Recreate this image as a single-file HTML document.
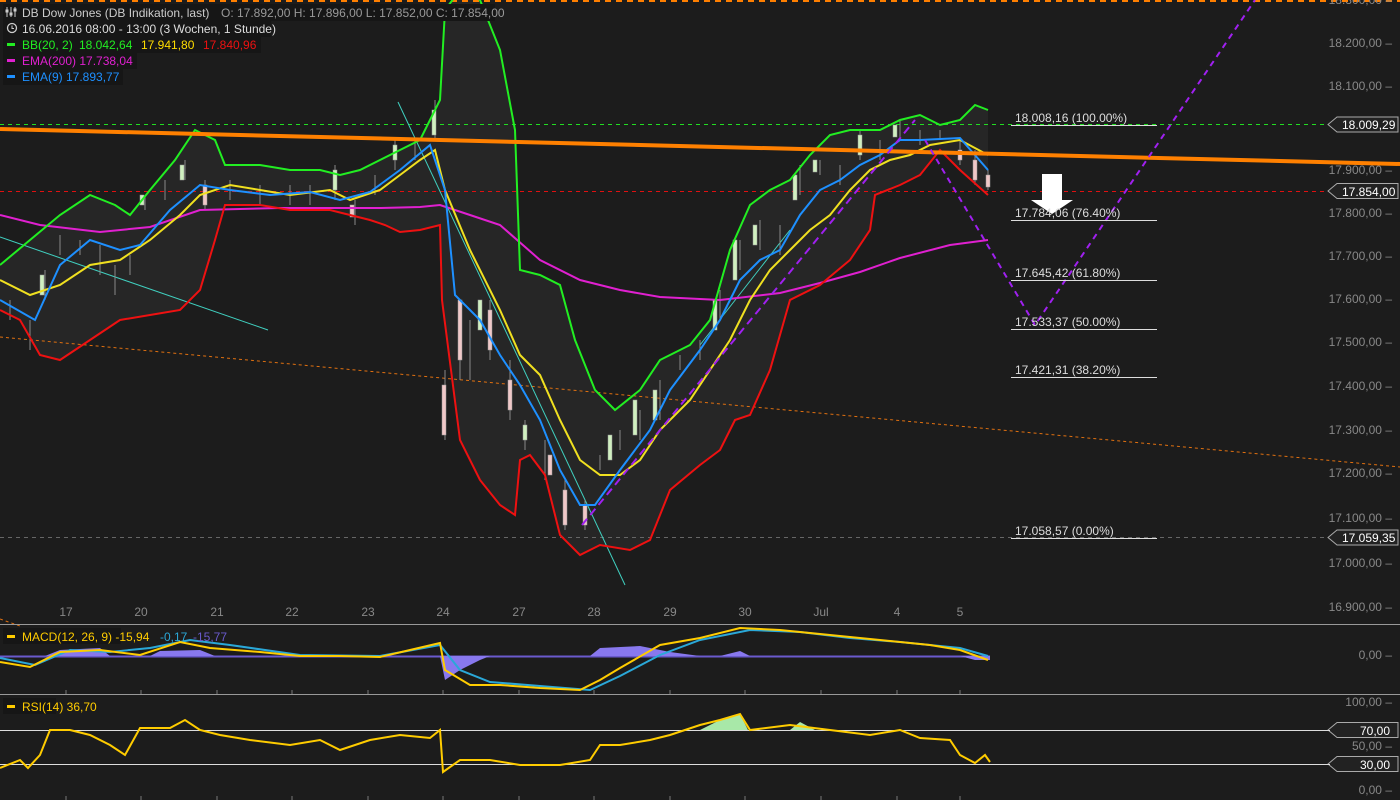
<!DOCTYPE html><html><head><meta charset="utf-8"><style>
html,body{margin:0;padding:0;background:#1c1c1c;width:1400px;height:800px;overflow:hidden;font-family:"Liberation Sans",sans-serif}
svg{display:block}
text{font-family:"Liberation Sans",sans-serif}
</style></head><body>
<svg width="1400" height="800" viewBox="0 0 1400 800">
<rect width="1400" height="800" fill="#1c1c1c"/>
<!-- BB shading -->
<polygon fill="#262626" points="0,265 30,240 60,215 90,195 115,205 130,215 150,190 175,160 195,130 215,140 225,165 260,165 290,170 320,170 340,175 360,170 380,160 400,150 420,140 440,100 445,10 460,-10 480,0 500,50 515,130 520,270 540,275 560,285 575,340 595,390 615,410 640,390 660,360 690,345 710,320 730,250 750,205 770,190 790,180 810,155 830,135 850,130 880,130 900,120 920,115 940,125 960,120 975,105 988,110 988,195 960,170 940,150 920,175 900,185 875,195 870,230 850,260 820,285 790,300 770,370 750,415 735,420 720,450 700,465 670,490 650,540 630,550 600,545 580,555 560,535 545,475 530,455 520,460 515,515 500,505 480,480 460,440 442,300 440,225 420,230 400,232 385,225 370,220 350,215 330,210 290,210 260,205 225,205 215,240 200,290 180,310 150,315 120,320 90,340 60,360 40,355 20,320 0,310"/>
<!-- top orange dashed -->
<line x1="0" y1="1" x2="1400" y2="1" stroke="#ff7f00" stroke-width="2" stroke-dasharray="6,5"/>
<!-- horizontal dashed levels -->
<line x1="0" y1="124.5" x2="1330" y2="124.5" stroke="#22dd22" stroke-dasharray="4,4"/>
<line x1="0" y1="191.5" x2="1330" y2="191.5" stroke="#e01010" stroke-dasharray="4,4"/>
<line x1="0" y1="537.5" x2="1330" y2="537.5" stroke="#666" stroke-dasharray="4,4"/>
<!-- orange dashed trend -->
<line x1="0" y1="337" x2="1400" y2="467" stroke="#e07010" stroke-dasharray="3,3"/>
<!-- cyan thin lines -->
<line x1="0" y1="237" x2="268" y2="330" stroke="#40d0c0" stroke-width="1"/>
<line x1="398" y1="102" x2="625" y2="585" stroke="#40d0c0" stroke-width="1"/>
<line x1="700" y1="345" x2="790" y2="230" stroke="#40d0c0" stroke-width="1"/>
<!-- candles (approx) -->
<g stroke="#888" stroke-width="1">
<path d="M10 300v20M30 320v30M45 270v30M60 235v20M80 240v15M100 245v30M115 265v30M130 255v20M145 195v15M165 180v20M185 160v20M205 180v30M230 180v20M260 185v20M290 185v20M310 185v20M335 165v35M355 200v25M375 175v20M395 140v30M415 140v20M435 100v40M445 370v70M460 300v80M470 320v60M490 300v60M510 360v60M525 420v30M545 440v40M565 480v50M585 500v30M600 455v15M620 430v20M640 410v30M660 380v40M680 355v15M700 340v20M720 290v30M740 240v30M760 220v30M780 225v30M800 165v30M820 160v15M840 165v20M860 130v30M880 140v20M900 120v20M920 130v15M940 130v10M960 140v25M975 150v35M988 170v20"/>
</g>
<g fill="#f0c8c8" stroke="#999" stroke-width="0.5">
<rect x="442" y="385" width="4" height="50"/><rect x="458" y="300" width="4" height="60"/><rect x="488" y="310" width="4" height="40"/><rect x="508" y="380" width="4" height="30"/><rect x="548" y="455" width="4" height="20"/><rect x="563" y="490" width="4" height="35"/><rect x="583" y="505" width="4" height="20"/><rect x="958" y="150" width="4" height="10"/><rect x="973" y="160" width="4" height="20"/><rect x="986" y="175" width="4" height="12"/><rect x="350" y="205" width="4" height="12"/><rect x="203" y="185" width="4" height="20"/>
</g>
<g fill="#d0f0c0" stroke="#999" stroke-width="0.5">
<rect x="432" y="110" width="4" height="25"/><rect x="478" y="300" width="4" height="30"/><rect x="523" y="425" width="4" height="15"/><rect x="608" y="435" width="4" height="25"/><rect x="633" y="400" width="4" height="35"/><rect x="653" y="390" width="4" height="30"/><rect x="713" y="300" width="4" height="30"/><rect x="733" y="240" width="4" height="40"/><rect x="753" y="225" width="4" height="20"/><rect x="793" y="175" width="4" height="25"/><rect x="813" y="160" width="4" height="12"/><rect x="858" y="135" width="4" height="20"/><rect x="893" y="125" width="4" height="12"/><rect x="40" y="275" width="4" height="20"/><rect x="140" y="195" width="4" height="10"/><rect x="180" y="165" width="4" height="15"/><rect x="333" y="170" width="4" height="20"/><rect x="393" y="145" width="4" height="15"/>
</g>
<!-- indicator lines -->
<polyline fill="none" stroke="#e020d0" stroke-width="2" points="0,215 40,225 100,232 150,227 200,210 280,208 330,208 380,208 420,207 440,205 470,215 500,225 540,260 580,280 620,290 660,297 720,300 780,293 820,283 860,272 900,258 950,245 988,240"/>
<polyline fill="none" stroke="#ee1111" stroke-width="2" points="0,310 20,320 40,355 60,360 90,340 120,320 150,315 180,310 200,290 215,240 225,205 260,205 290,210 330,210 350,215 370,220 385,225 400,232 420,230 440,225 442,300 460,440 480,480 500,505 515,515 520,460 530,455 545,475 560,535 580,555 600,545 630,550 650,540 670,490 700,465 720,450 735,420 750,415 770,370 790,300 820,285 850,260 870,230 875,195 900,185 920,175 940,150 960,170 988,195"/>
<polyline fill="none" stroke="#22ee22" stroke-width="2" points="0,265 30,240 60,215 90,195 115,205 130,215 150,190 175,160 195,130 215,140 225,165 260,165 290,170 320,170 340,175 360,170 380,160 400,150 420,140 440,100 445,10 460,-10 480,0 500,50 515,130 520,270 540,275 560,285 575,340 595,390 615,410 640,390 660,360 690,345 710,320 730,250 750,205 770,190 790,180 810,155 830,135 850,130 880,130 900,120 920,115 940,125 960,120 975,105 988,110"/>
<polyline fill="none" stroke="#f0e020" stroke-width="2" points="0,280 30,295 60,285 90,265 120,260 150,240 180,215 200,195 230,185 260,190 290,195 330,190 350,200 380,190 400,175 420,160 435,150 445,190 470,250 500,310 520,355 540,375 560,420 580,460 600,475 620,475 640,460 660,430 690,400 710,370 730,340 750,300 770,270 790,250 810,230 830,215 850,190 870,170 890,160 910,155 930,145 960,140 988,155"/>
<polyline fill="none" stroke="#1e90ff" stroke-width="2" points="0,300 35,320 60,265 90,240 120,250 140,245 170,210 200,185 230,190 270,195 310,192 340,200 370,192 400,170 430,145 445,190 455,295 480,320 500,355 520,385 540,420 560,470 580,505 595,505 620,470 650,430 670,390 700,350 720,320 740,280 760,260 780,250 800,215 820,190 840,180 860,165 880,155 900,140 920,140 960,138 988,170"/>
<!-- orange thick trend -->
<line x1="0" y1="129" x2="1400" y2="164" stroke="#ff8000" stroke-width="4"/>
<!-- purple dashed -->
<polyline fill="none" stroke="#a020f0" stroke-width="2" stroke-dasharray="8,5" points="582,525 915,120"/>
<polyline fill="none" stroke="#a020f0" stroke-width="2" stroke-dasharray="6,5" points="925,140 1035,325 1255,0"/>
<!-- white arrow -->
<polygon fill="#fff" points="1042,174 1062,174 1062,200 1073,200 1052,214 1031,200 1042,200"/>
<!-- fib labels -->
<g fill="#ddd" font-size="12">
<text x="1015" y="122">18.008,16 (100.00%)</text>
<text x="1015" y="217">17.784,06 (76.40%)</text>
<text x="1015" y="277">17.645,42 (61.80%)</text>
<text x="1015" y="326">17.533,37 (50.00%)</text>
<text x="1015" y="374">17.421,31 (38.20%)</text>
<text x="1015" y="535">17.058,57 (0.00%)</text>
</g>
<g stroke="#ddd" stroke-width="1">
<line x1="1011" y1="125.5" x2="1157" y2="125.5"/><line x1="1011" y1="220.5" x2="1157" y2="220.5"/><line x1="1011" y1="280.5" x2="1157" y2="280.5"/><line x1="1011" y1="329.5" x2="1157" y2="329.5"/><line x1="1011" y1="377.5" x2="1157" y2="377.5"/><line x1="1011" y1="538.5" x2="1157" y2="538.5"/>
</g>
<!-- right axis -->
<g fill="#888" font-size="12" text-anchor="end">
<text x="1392" y="4">18.300,00 –</text>
<text x="1392" y="47">18.200,00 –</text>
<text x="1392" y="90">18.100,00 –</text>
<text x="1392" y="174">17.900,00 –</text>
<text x="1392" y="217">17.800,00 –</text>
<text x="1392" y="260">17.700,00 –</text>
<text x="1392" y="303">17.600,00 –</text>
<text x="1392" y="346">17.500,00 –</text>
<text x="1392" y="390">17.400,00 –</text>
<text x="1392" y="434">17.300,00 –</text>
<text x="1392" y="477">17.200,00 –</text>
<text x="1392" y="522">17.100,00 –</text>
<text x="1392" y="567">17.000,00 –</text>
<text x="1392" y="611">16.900,00 –</text>
<text x="1392" y="659">0,00 –</text>
<text x="1392" y="706">100,00 –</text>
<text x="1392" y="750">50,00 –</text>
<text x="1392" y="794">0,00 –</text>
</g>
<!-- price tags -->
<g font-size="12">
<polygon points="1328,124.5 1337,117 1398,117 1398,132 1337,132" fill="#222" stroke="#aaa"/>
<text x="1342" y="129" fill="#fff">18.009,29</text>
<polygon points="1328,191 1337,183.5 1398,183.5 1398,198.5 1337,198.5" fill="#222" stroke="#aaa"/>
<text x="1342" y="196" fill="#fff">17.854,00</text>
<polygon points="1328,537.5 1337,530 1398,530 1398,545 1337,545" fill="#222" stroke="#aaa"/>
<text x="1342" y="542" fill="#fff">17.059,35</text>
<polygon points="1328,730 1337,722.5 1398,722.5 1398,737.5 1337,737.5" fill="#222" stroke="#aaa"/>
<text x="1360" y="735" fill="#fff">70,00</text>
<polygon points="1328,764 1337,756.5 1398,756.5 1398,771.5 1337,771.5" fill="#222" stroke="#aaa"/>
<text x="1360" y="769" fill="#fff">30,00</text>
</g>
<!-- x axis labels -->
<g fill="#888" font-size="12" text-anchor="middle">
<text x="66" y="616">17</text><text x="141" y="616">20</text><text x="217" y="616">21</text><text x="292" y="616">22</text><text x="368" y="616">23</text><text x="443" y="616">24</text><text x="519" y="616">27</text><text x="594" y="616">28</text><text x="670" y="616">29</text><text x="745" y="616">30</text><text x="821" y="616">Jul</text><text x="897" y="616">4</text><text x="960" y="616">5</text>
</g>
<line x1="0" y1="619" x2="20" y2="626" stroke="#e07010" stroke-dasharray="3,3"/>
<!-- panel separators -->
<line x1="0" y1="624.5" x2="1400" y2="624.5" stroke="#999"/>
<line x1="0" y1="694.5" x2="1400" y2="694.5" stroke="#999"/>
<g stroke="#777"><path d="M66 690v4M141 690v4M217 690v4M292 690v4M368 690v4M443 690v4M519 690v4M594 690v4M670 690v4M745 690v4M821 690v4M897 690v4M960 690v4M66 796v4M141 796v4M217 796v4M292 796v4M368 796v4M443 796v4M519 796v4M594 796v4M670 796v4M745 796v4M821 796v4M897 796v4M960 796v4"/></g>
<!-- MACD histogram -->
<line x1="0" y1="656.5" x2="990" y2="656.5" stroke="#6a5acd" stroke-width="2"/>
<path fill="#8878ee" d="M45 656 L60 650 L100 648 L110 656Z M150 656 L160 651 L200 650 L215 656Z M440 656 L445 680 L460 670 L480 660 L490 656Z M590 656 L600 648 L640 646 L670 652 L700 656Z M720 656 L740 651 L750 656Z M960 656 L975 660 L990 660 L990 656Z"/>
<polyline fill="none" stroke="#2aa8d8" stroke-width="2" points="0,658 35,665 70,650 110,652 150,648 190,640 230,645 300,655 380,656 440,645 460,670 490,682 540,686 590,690 620,676 660,655 700,640 750,630 800,632 850,638 900,642 960,648 988,656"/>
<polyline fill="none" stroke="#ffcc00" stroke-width="2" points="0,662 30,667 60,652 100,650 140,655 180,642 210,648 260,652 300,656 340,656 380,657 410,650 440,643 445,670 470,685 500,685 540,688 580,690 600,680 620,668 660,645 700,638 740,628 780,630 830,635 880,640 930,645 960,650 988,660"/>
<!-- RSI -->
<line x1="0" y1="730.5" x2="1330" y2="730.5" stroke="#ddd"/>
<line x1="0" y1="764.5" x2="1330" y2="764.5" stroke="#ddd"/>
<path fill="#a8e8a8" d="M700 730 L720 720 L740 714 L748 730Z M790 730 L800 722 L815 730Z"/>
<polyline fill="none" stroke="#ffcc00" stroke-width="2" points="0,768 20,760 28,768 40,755 50,730 70,730 90,735 110,745 125,755 140,728 170,728 185,720 200,730 220,735 250,740 290,745 320,740 340,750 370,740 400,735 430,738 440,730 443,772 460,760 490,760 520,765 560,765 590,760 600,745 620,745 650,740 670,735 700,725 720,720 740,714 750,730 790,725 830,730 870,735 900,730 920,738 950,740 960,755 975,763 985,755 990,762"/>
<!-- legends -->
<g font-size="12">
<rect x="3" y="4" width="492" height="17" fill="#161616"/>
<text x="22" y="17" fill="#ccc">DB Dow Jones (DB Indikation, last)</text>
<text x="221" y="17" fill="#999">O: 17.892,00  H: 17.896,00  L: 17.852,00  C: 17.854,00</text>
<g stroke="#ccc" stroke-width="1"><path d="M7 7v10M11 7v10M15 7v10"/><rect x="6" y="10" width="2" height="2" fill="#ccc"/><rect x="10" y="13" width="2" height="2" fill="#ccc"/><rect x="14" y="9" width="2" height="2" fill="#ccc"/></g>
<rect x="3" y="21" width="268" height="16" fill="#161616"/>
<circle cx="12" cy="28" r="4.5" fill="none" stroke="#ccc" stroke-width="1.3"/><path d="M12 25.5v3h2" stroke="#ccc" fill="none"/>
<text x="22" y="33" fill="#ddd">16.06.2016 08:00 - 13:00 (3 Wochen, 1 Stunde)</text>
<rect x="3" y="37" width="258" height="16" fill="#161616"/>
<rect x="7" y="43" width="8" height="3" fill="#22ee22"/>
<text x="22" y="49" fill="#22ee22">BB(20, 2)</text><text x="79" y="49" fill="#22ee22">18.042,64</text><text x="141" y="49" fill="#ffdd00">17.941,80</text><text x="203" y="49" fill="#ee1111">17.840,96</text>
<rect x="3" y="53" width="134" height="16" fill="#161616"/>
<rect x="7" y="59" width="8" height="3" fill="#e020d0"/>
<text x="22" y="65" fill="#e020d0">EMA(200)  17.738,04</text>
<rect x="3" y="69" width="120" height="16" fill="#161616"/>
<rect x="7" y="75" width="8" height="3" fill="#1e90ff"/>
<text x="22" y="81" fill="#1e90ff">EMA(9)  17.893,77</text>
<rect x="3" y="628" width="118" height="16" fill="#161616"/>
<rect x="7" y="635" width="8" height="3" fill="#ffcc00"/>
<text x="22" y="641" fill="#ffcc00" font-size="12">MACD(12, 26, 9)  -15,94</text>
<text x="160" y="641" fill="#2aa8d8">-0,17</text><text x="193" y="641" fill="#6a5acd">-15,77</text>
<rect x="3" y="698" width="53" height="16" fill="#161616"/>
<rect x="7" y="705" width="8" height="3" fill="#ffcc00"/>
<text x="22" y="711" fill="#ffcc00">RSI(14)  36,70</text>
</g>
</svg>
</body></html>
